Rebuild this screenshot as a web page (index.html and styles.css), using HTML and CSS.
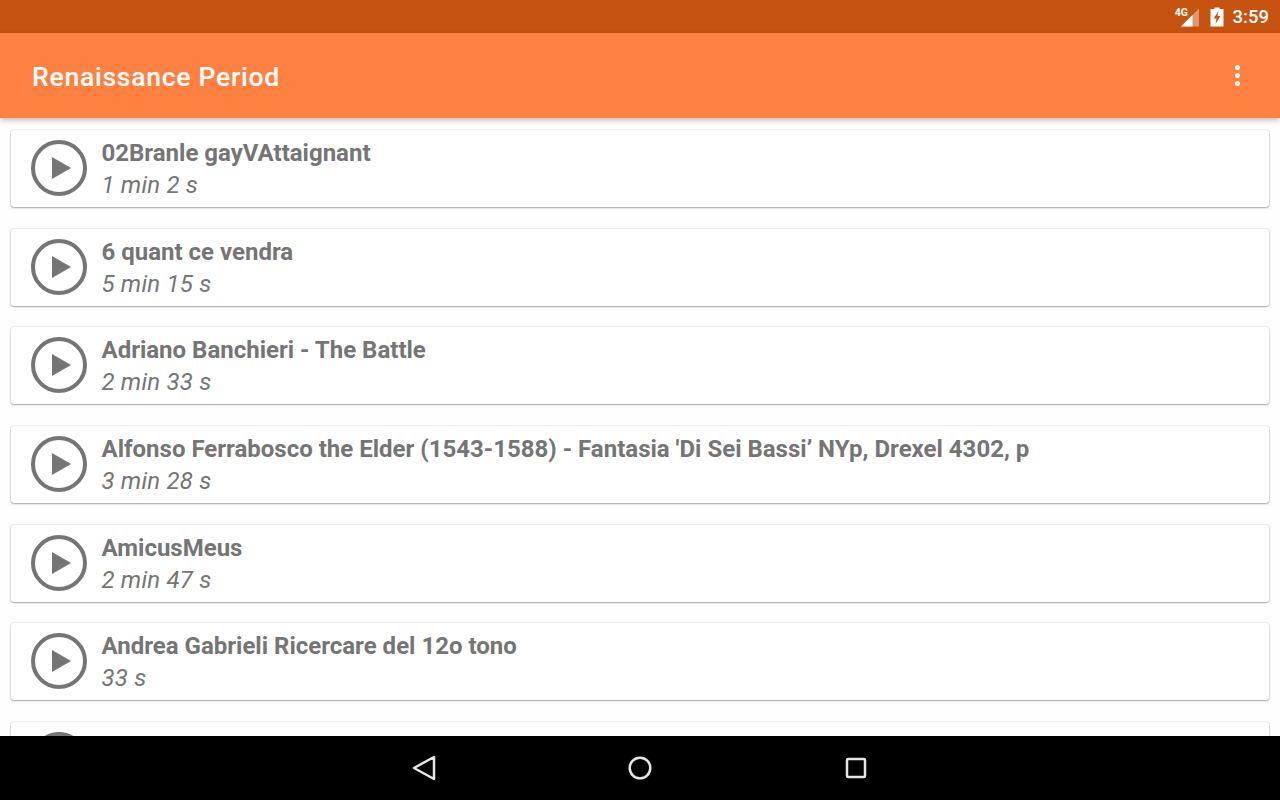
FILE: index.html
```html
<!DOCTYPE html>
<html lang="en">
<head>
<meta charset="utf-8">
<title>Renaissance Period</title>
<link rel="stylesheet" href="styles.css">
</head>
<body>
<div class="screen">
  <div class="status">
    <svg class="net" width="26" height="22" viewBox="0 0 26 22">
      <path class="dim" d="M24 2.500V20.500H6Z"/>
      <path class="full" d="M17.500 9V20.500H6Z"/>
    </svg>
    <span class="lte">4G</span>
    <svg class="batt" width="14" height="20" viewBox="0 0 14 20">
      <path class="full" fill-rule="evenodd" d="M4.500 .5H9.500V2H13.500V19.500H.5V2H4.500ZM8.500 4L3.500 11.500H6.500L5.500 17L10.500 9H7.500Z"/>
    </svg>
    <span class="time">3:59</span>
  </div>
  <header class="bar">
    <h1 class="title">Renaissance Period</h1>
    <div class="more"><i></i><i></i><i></i></div>
  </header>
  <main class="list">
    <div class="card">
      <svg class="play" viewBox="0 0 56 56"><circle cx="28" cy="28" r="26"/><path d="M21 17L40 28L21 39Z"/></svg>
      <div class="info"><div class="name">02Branle gayVAttaignant</div><div class="dur">1 min 2 s</div></div>
    </div>
    <div class="card">
      <svg class="play" viewBox="0 0 56 56"><circle cx="28" cy="28" r="26"/><path d="M21 17L40 28L21 39Z"/></svg>
      <div class="info"><div class="name">6 quant ce vendra</div><div class="dur">5 min 15 s</div></div>
    </div>
    <div class="card">
      <svg class="play" viewBox="0 0 56 56"><circle cx="28" cy="28" r="26"/><path d="M21 17L40 28L21 39Z"/></svg>
      <div class="info"><div class="name">Adriano Banchieri - The Battle</div><div class="dur">2 min 33 s</div></div>
    </div>
    <div class="card">
      <svg class="play" viewBox="0 0 56 56"><circle cx="28" cy="28" r="26"/><path d="M21 17L40 28L21 39Z"/></svg>
      <div class="info"><div class="name">Alfonso Ferrabosco the Elder (1543-1588) - Fantasia 'Di Sei Bassi’ NYp, Drexel 4302, p</div><div class="dur">3 min 28 s</div></div>
    </div>
    <div class="card">
      <svg class="play" viewBox="0 0 56 56"><circle cx="28" cy="28" r="26"/><path d="M21 17L40 28L21 39Z"/></svg>
      <div class="info"><div class="name">AmicusMeus</div><div class="dur">2 min 47 s</div></div>
    </div>
    <div class="card">
      <svg class="play" viewBox="0 0 56 56"><circle cx="28" cy="28" r="26"/><path d="M21 17L40 28L21 39Z"/></svg>
      <div class="info"><div class="name">Andrea Gabrieli Ricercare del 12o tono</div><div class="dur">33 s</div></div>
    </div>
    <div class="card">
      <svg class="play" viewBox="0 0 56 56"><circle cx="28" cy="28" r="26"/><path d="M21 17L40 28L21 39Z"/></svg>
    </div>
  </main>
  <nav class="nav">
    <svg class="navicon" width="24" height="26" viewBox="0 0 24 26"><path d="M22 2V24L2 13Z"/></svg>
    <svg class="navicon" width="24" height="24" viewBox="0 0 24 24"><circle cx="12" cy="12" r="10.300"/></svg>
    <svg class="navicon" width="24" height="24" viewBox="0 0 24 24"><rect x="3" y="3" width="18" height="18" rx="1"/></svg>
  </nav>
</div>
</body>
</html>
```
FILE: styles.css
```css
html, body {
  margin: 0;
  padding: 0;
  background: #fefefe;
}
.screen {
  width: 1280px;
  height: 800px;
  display: flex;
  flex-direction: column;
  overflow: hidden;
  font-family: Roboto, "Liberation Sans", sans-serif;
}
.status {
  height: 33px;
  flex: none;
  background: #c75311;
  display: flex;
  align-items: center;
  justify-content: flex-end;
  padding-right: 11px;
  color: #fff;
  position: relative;
}
.net { margin-right: 9px; }
.full { fill: #fff; }
.dim { fill: #fff; opacity: .4; }
.lte {
  position: absolute;
  right: 92px;
  top: 7px;
  font-size: 10.500px;
  font-weight: 700;
  line-height: 11px;
}
.batt { margin-right: 9px; }
.time {
  font-size: 18.500px;
  font-weight: 500;
}
.bar {
  height: 85px;
  flex: none;
  background: #ff8142;
  display: flex;
  align-items: center;
  justify-content: space-between;
  padding: 0 40px 0 32px;
  box-shadow: 0 2px 6px rgba(0, 0, 0, .28);
  position: relative;
  z-index: 1;
}
.title {
  margin: 2px 0 0;
  color: #fff;
  font-size: 26.600px;
  font-weight: 500;
  letter-spacing: .7px;
}
.more {
  display: flex;
  flex-direction: column;
  gap: 3px;
}
.more i {
  width: 5px;
  height: 5px;
  border-radius: 50%;
  background: #fff;
}
.list {
  flex: 1;
  min-height: 0;
  overflow: hidden;
  padding: 12px 11px 0;
}
.card {
  height: 77px;
  margin-bottom: 21.670px;
  background: #fff;
  border-radius: 3px;
  box-shadow: 0 0 0 1px rgba(0, 0, 0, .05), 0 1px 2px rgba(0, 0, 0, .32);
  display: flex;
  align-items: center;
  padding-left: 20px;
}
.play {
  width: 56px;
  height: 56px;
  flex: none;
  margin: 0 14px 1px 0;
}
.play circle {
  fill: none;
  stroke: #757575;
  stroke-width: 4;
}
.play path { fill: #757575; }
.info {
  display: flex;
  flex-direction: column;
  color: #757575;
  padding: 1px 0 1px .5px;
}
.name {
  font-size: 24px;
  font-weight: 700;
  line-height: 34px;
  white-space: nowrap;
}
.dur {
  font-size: 24px;
  font-style: italic;
  line-height: 32px;
  letter-spacing: .2px;
  margin-top: -1px;
}
.nav {
  height: 64px;
  flex: none;
  background: #000;
  display: flex;
  align-items: center;
  justify-content: center;
  gap: 192px;
  position: relative;
  z-index: 2;
}
.navicon path, .navicon circle, .navicon rect {
  fill: none;
  stroke: #e6e6e6;
  stroke-width: 2.500;
  stroke-linejoin: round;
}
```
